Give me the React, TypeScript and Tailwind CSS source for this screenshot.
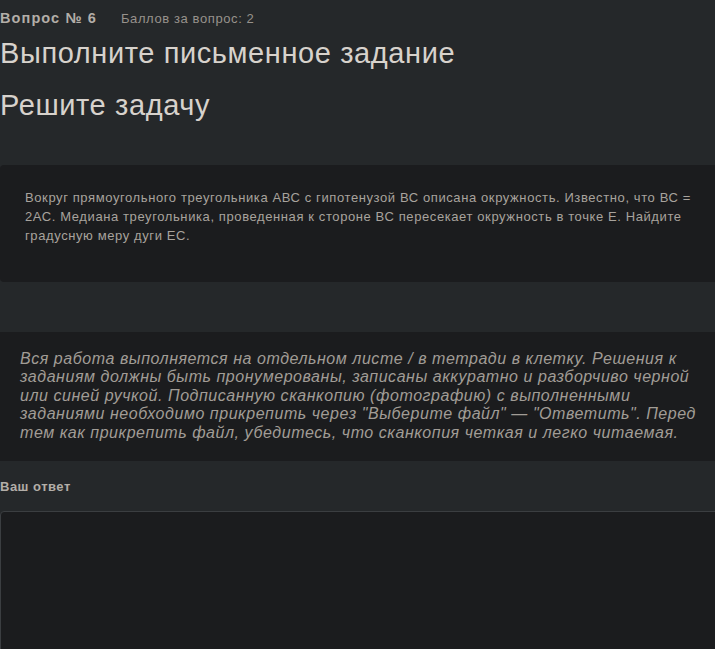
export default function App() {
  return (
    <div className="min-h-[649px] w-full overflow-hidden bg-[#25282a] font-['Liberation_Sans',Arial,sans-serif]">
      <div className="w-[730px]">
        <div className="flex items-baseline gap-6 pt-[8px]">
          <span className="text-[14.5px] font-bold tracking-[1.1px] text-[#b3aea8]">Вопрос № 6</span>
          <span className="text-[13px] tracking-[0.6px] text-[#97928c]">Баллов за вопрос: 2</span>
        </div>

        <h1 className="mt-[6px] text-[29px] leading-[34px] tracking-[0.6px] text-[#d7d2cc]">
          Выполните письменное задание
        </h1>
        <h2 className="mt-[18px] text-[29px] leading-[34px] tracking-[0.6px] text-[#d7d2cc]">Решите задачу</h2>

        <div className="mt-[43px] rounded-[4px] bg-[#1b1c1e] px-[25px] pt-[23px] pb-[37px]">
          <p className="text-[13px] leading-[19px] tracking-[0.6px] text-[#a8a39d]">
            Вокруг прямоугольного треугольника АВС с гипотенузой ВС описана окружность. Известно, что ВС = 2АС.
            Медиана треугольника, проведенная к стороне ВС пересекает окружность в точке Е. Найдите градусную меру
            дуги ЕС.
          </p>
        </div>

        <div className="mt-[50px] bg-[#1b1c1e] px-[20px] pt-[18px] pb-[19px]">
          <p className="text-[16px] italic leading-[18.5px] tracking-[0.55px] text-[#a19c96]">
            Вся работа выполняется на отдельном листе / в тетради в клетку. Решения к заданиям должны быть
            пронумерованы, записаны аккуратно и разборчиво черной или синей ручкой. Подписанную сканкопию
            (фотографию) с выполненными заданиями необходимо прикрепить через "Выберите файл" — "Ответить". Перед
            тем как прикрепить файл, убедитесь, что сканкопия четкая и легко читаемая.
          </p>
        </div>

        <div className="pt-[18px]">
          <label className="block text-[13px] font-bold leading-[16px] tracking-[0.5px] text-[#b3aea8]">
            Ваш ответ
          </label>
          <textarea className="mt-[16px] block h-[200px] w-full resize-none rounded-[4px] border border-[#3b3e41] bg-[#1b1c1e] outline-none" />
        </div>
      </div>
    </div>
  );
}
